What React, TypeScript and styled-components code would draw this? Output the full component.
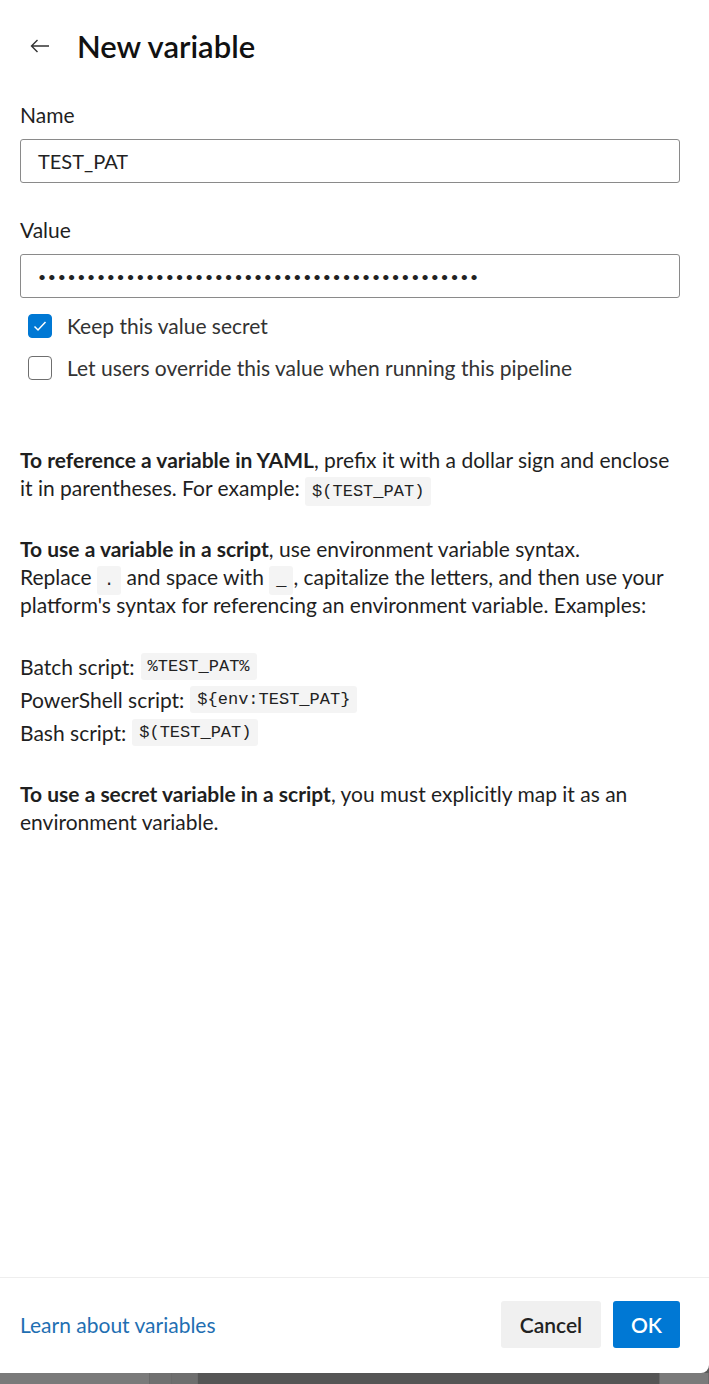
import React from "react";
import styled, { createGlobalStyle } from "styled-components";

const GlobalStyle = createGlobalStyle`
  html, body {
    margin: 0;
    padding: 0;
    background: #5a5a5a;
  }
  body {
    font-family: Lato, "Noto Sans", "Liberation Sans", sans-serif;
    color: #1f1f1f;
  }
`;

// Layout

const Page = styled.div`
  width: 709px;
  height: 1384px;
  display: flex;
  flex-direction: column;
  overflow: hidden;
`;

const Panel = styled.div`
  height: 1373px;
  background: #ffffff;
  border-bottom-right-radius: 8px;
  display: flex;
  flex-direction: column;
  box-sizing: border-box;
`;

const Body = styled.div`
  flex: 1;
  padding: 0 29px 0 20px;
  display: flex;
  flex-direction: column;
`;

const Header = styled.div`
  display: flex;
  align-items: center;
  gap: 27px;
  height: 92px;
  padding-left: 10px;
`;

const BackButton = styled.button`
  width: 20px;
  height: 20px;
  padding: 0;
  border: none;
  background: none;
  display: flex;
  align-items: center;
  justify-content: center;
  color: #333;
`;

const Title = styled.h1`
  margin: 0;
  font-size: 31px;
  font-weight: 600;
  color: #111;
`;

const Label = styled.div<{ $top: number }>`
  font-size: 21px;
  line-height: 24px;
  margin-top: ${(p) => p.$top}px;
  margin-bottom: 12px;
`;

const Field = styled.div`
  height: 44px;
  box-sizing: border-box;
  border: 1px solid #8a8a8a;
  border-radius: 3px;
  padding: 0 17px;
  display: flex;
  align-items: center;
  font-size: 20px;
  color: #222;
`;

const Dots = styled.span`
  font-size: 14px;
  letter-spacing: 1.7px;
  color: #222;
`;

const Checks = styled.div`
  display: flex;
  flex-direction: column;
  gap: 18px;
  margin-top: 16px;
  padding-left: 8px;
`;

const CheckRow = styled.label`
  display: flex;
  align-items: center;
  gap: 15px;
  font-size: 21px;
  line-height: 24px;
  color: #333;
`;

const Box = styled.span<{ $on?: boolean }>`
  width: 24px;
  height: 24px;
  box-sizing: border-box;
  border-radius: 4px;
  border: 1px solid ${(p) => (p.$on ? "#0078d4" : "#6f6f6f")};
  background: ${(p) => (p.$on ? "#0078d4" : "#fff")};
  display: flex;
  align-items: center;
  justify-content: center;
`;

const Help = styled.div`
  margin-top: 66px;
  display: flex;
  flex-direction: column;
  gap: 33px;
`;

const Para = styled.p`
  margin: 0;
  font-size: 21px;
  line-height: 28px;
  color: #1f1f1f;
`;

const ExampleList = styled.div`
  display: flex;
  flex-direction: column;
  gap: 4px;
  font-size: 21px;
`;

const ExampleRow = styled.div`
  display: flex;
  align-items: center;
  gap: 6px;
  height: 29px;
`;

const Code = styled.code`
  font-family: "Liberation Mono", "DejaVu Sans Mono", monospace;
  font-size: 17px;
  line-height: 1;
  background: #f4f4f4;
  border-radius: 3px;
  padding: 5px 7px;
  color: #222;
`;

const Footer = styled.div`
  border-top: 1px solid #eeeeee;
  padding: 23px 29px 25px 20px;
  display: flex;
  align-items: center;
  justify-content: space-between;
`;

const Link = styled.a`
  font-size: 21px;
  color: #1f6fb2;
  text-decoration: none;
`;

const Buttons = styled.div`
  display: flex;
  gap: 12px;
`;

const Button = styled.button<{ $primary?: boolean }>`
  height: 47px;
  width: ${(p) => (p.$primary ? 67 : 100)}px;
  padding: 0;
  border: none;
  border-radius: 3px;
  font-family: inherit;
  font-size: 21px;
  font-weight: 600;
  background: ${(p) => (p.$primary ? "#0078d4" : "#f0f0f0")};
  color: ${(p) => (p.$primary ? "#fff" : "#222")};
`;

const Strip = styled.div`
  flex: 1;
  display: flex;
`;

const StripPart = styled.div<{ $w: number; $bg: string }>`
  width: ${(p) => p.$w}px;
  background: ${(p) => p.$bg};
  border-right: 1px solid #6a6a6a;
`;

// Component

const App: React.FC = () => {
  return (
    <Page>
      <GlobalStyle />
      <Panel>
        <Body>
          <Header>
            <BackButton aria-label="Back">
              <svg width="20" height="14" viewBox="0 0 20 14" fill="none">
                <path d="M19 7H1.5M7.5 1L1.5 7l6 6" stroke="#333" strokeWidth="1.4" />
              </svg>
            </BackButton>
            <Title>New variable</Title>
          </Header>

          <Label $top={11}>Name</Label>
          <Field>TEST_PAT</Field>

          <Label $top={35}>Value</Label>
          <Field>
            <Dots>{"•".repeat(45)}</Dots>
          </Field>

          <Checks>
            <CheckRow>
              <Box $on>
                <svg width="14" height="12" viewBox="0 0 14 12" fill="none">
                  <path d="M1.5 6.5l3.5 3.5 7.5-8" stroke="#fff" strokeWidth="1.5" />
                </svg>
              </Box>
              Keep this value secret
            </CheckRow>
            <CheckRow>
              <Box />
              Let users override this value when running this pipeline
            </CheckRow>
          </Checks>

          <Help>
            <Para>
              <b>To reference a variable in YAML</b>, prefix it with a dollar sign and enclose
              it in parentheses. For example: <Code>$(TEST_PAT)</Code>
            </Para>
            <Para>
              <b>To use a variable in a script</b>, use environment variable syntax.
              <br />
              Replace <Code>.</Code> and space with <Code>_</Code>, capitalize the letters, and
              then use your platform's syntax for referencing an environment variable. Examples:
            </Para>
            <ExampleList>
              <ExampleRow>
                Batch script: <Code>%TEST_PAT%</Code>
              </ExampleRow>
              <ExampleRow>
                PowerShell script: <Code>{"${env:TEST_PAT}"}</Code>
              </ExampleRow>
              <ExampleRow>
                Bash script: <Code>$(TEST_PAT)</Code>
              </ExampleRow>
            </ExampleList>
            <Para>
              <b>To use a secret variable in a script</b>, you must explicitly map it as an
              environment variable.
            </Para>
          </Help>
        </Body>

        <Footer>
          <Link href="#">Learn about variables</Link>
          <Buttons>
            <Button>Cancel</Button>
            <Button $primary>OK</Button>
          </Buttons>
        </Footer>
      </Panel>
      <Strip>
        <StripPart $w={150} $bg="#7a7a7a" />
        <StripPart $w={21} $bg="#707070" />
        <StripPart $w={25} $bg="#6e6e6e" />
        <StripPart $w={465} $bg="#555555" />
        <StripPart $w={48} $bg="#7a7a7a" />
      </Strip>
    </Page>
  );
};

export default App;
